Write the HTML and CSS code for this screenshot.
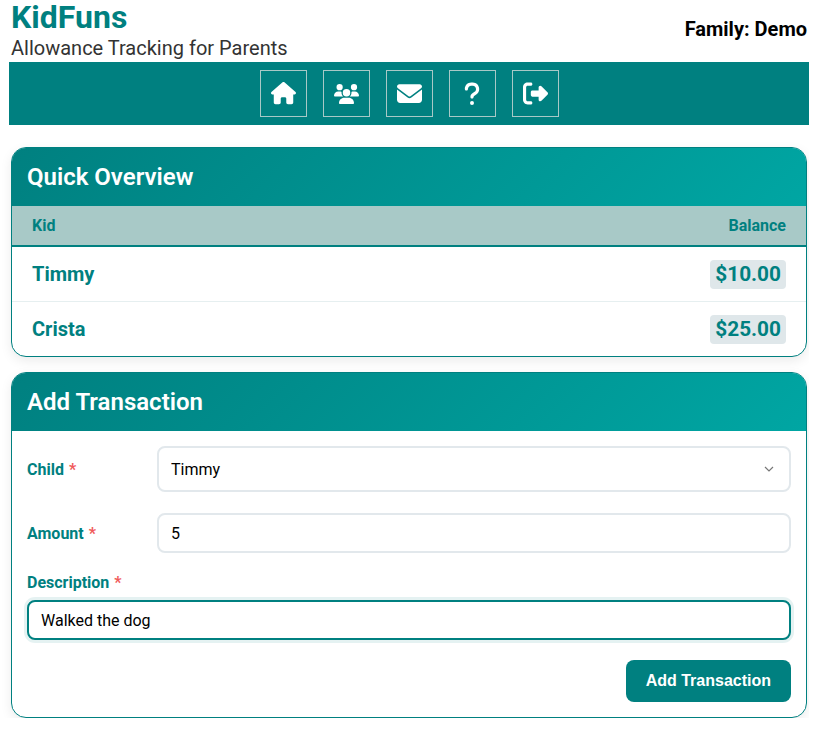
FILE: index.html
```html
<!DOCTYPE html>
<html lang="en">
<head>
    <meta charset="UTF-8">
    <meta name="viewport" content="width=device-width, initial-scale=1.0">
    <title>KidFuns</title>
    <link rel="stylesheet" href="styles.css">
</head>
<body>
    <header class="top">
        <div>
            <h1>KidFuns</h1>
            <p class="tagline">Allowance Tracking for Parents</p>
        </div>
        <div class="family">Family: Demo</div>
    </header>

    <nav class="nav">
        <a class="nav-btn" href="#"><svg class="icon" viewBox="0 0 576 512"><path d="M575.8 255.5c0 18-15 32.1-32 32.1h-32l.7 160.2c0 2.7-.2 5.4-.5 8.1V472c0 22.1-17.9 40-40 40H456c-1.1 0-2.2 0-3.3-.1c-1.4 .1-2.8 .1-4.2 .1H416 392c-22.1 0-40-17.9-40-40V448 384c0-17.7-14.3-32-32-32H256c-17.7 0-32 14.3-32 32v64 24c0 22.1-17.9 40-40 40H160 128.1c-1.5 0-3-.1-4.5-.2c-1.2 .1-2.4 .2-3.6 .2H104c-22.1 0-40-17.9-40-40V360c0-.9 0-1.9 .1-2.8V287.6H32c-18 0-32-14-32-32.1c0-9 3-17 10-24L266.4 8c7-7 15-8 22-8s15 2 21 7L564.8 231.5c8 7 12 15 11 24z"/></svg></a>
        <a class="nav-btn" href="#"><svg class="icon" viewBox="0 0 640 512"><path d="M144 0a80 80 0 1 1 0 160A80 80 0 1 1 144 0zM512 0a80 80 0 1 1 0 160A80 80 0 1 1 512 0zM0 298.7C0 239.8 47.8 192 106.7 192h42.7c15.9 0 31 3.5 44.6 9.7c-1.3 7.2-1.9 14.7-1.9 22.3c0 38.2 16.8 72.5 43.3 96c-.2 0-.4 0-.7 0H21.3C9.6 320 0 310.4 0 298.7zM405.3 320c-.2 0-.4 0-.7 0c26.6-23.5 43.3-57.8 43.3-96c0-7.6-.7-15-1.9-22.3c13.6-6.3 28.7-9.7 44.6-9.7h42.7C592.2 192 640 239.8 640 298.7c0 11.8-9.6 21.3-21.3 21.3H405.3zM224 224a96 96 0 1 1 192 0 96 96 0 1 1 -192 0zM128 485.3C128 411.7 187.7 352 261.3 352H378.7C452.3 352 512 411.7 512 485.3c0 14.7-11.9 26.7-26.7 26.7H154.7c-14.7 0-26.7-11.9-26.7-26.7z"/></svg></a>
        <a class="nav-btn" href="#"><svg class="icon" viewBox="0 0 512 512"><path d="M48 64C21.5 64 0 85.5 0 112c0 15.1 7.1 29.3 19.2 38.4L236.8 313.6c11.4 8.5 27 8.5 38.4 0L492.8 150.4c12.1-9.1 19.2-23.3 19.2-38.4c0-26.5-21.5-48-48-48H48zM0 176V384c0 35.3 28.7 64 64 64H448c35.3 0 64-28.7 64-64V176L294.4 339.2c-22.8 17.1-54 17.1-76.8 0L0 176z"/></svg></a>
        <a class="nav-btn" href="#"><svg class="icon icon-narrow" viewBox="0 0 320 512"><path d="M80 160c0-35.3 28.7-64 64-64h32c35.3 0 64 28.7 64 64v3.6c0 21.8-11.1 42.1-29.4 53.8l-42.2 27.1c-25.2 16.2-40.4 44.1-40.4 74V320c0 17.7 14.3 32 32 32s32-14.3 32-32v-1.4c0-8.2 4.2-15.8 11-20.2l42.2-27.1c36.6-23.6 58.8-64.1 58.8-107.7V160c0-70.7-57.3-128-128-128H144C73.3 32 16 89.3 16 160c0 17.7 14.3 32 32 32s32-14.3 32-32zm80 320a40 40 0 1 0 0-80 40 40 0 1 0 0 80z"/></svg></a>
        <a class="nav-btn" href="#"><svg class="icon" viewBox="0 0 512 512"><path d="M377.9 105.9L500.7 228.7c7.2 7.2 11.3 17.1 11.3 27.3s-4.1 20.1-11.3 27.3L377.9 406.1c-6.4 6.4-15 9.9-24 9.9c-18.7 0-33.9-15.2-33.9-33.9l0-62.1-128 0c-17.7 0-32-14.3-32-32l0-64c0-17.7 14.3-32 32-32l128 0 0-62.1c0-18.7 15.2-33.9 33.9-33.9c9 0 17.6 3.6 24 9.9zM160 96L96 96c-17.7 0-32 14.3-32 32l0 256c0 17.7 14.3 32 32 32l64 0c17.7 0 32 14.3 32 32s-14.3 32-32 32l-64 0c-53 0-96-43-96-96L0 128C0 75 43 32 96 32l64 0c17.7 0 32 14.3 32 32s-14.3 32-32 32z"/></svg></a>
    </nav>

    <main class="content">
        <section class="card">
            <h2 class="card-title">Quick Overview</h2>
            <div class="row row-head">
                <span>Kid</span>
                <span>Balance</span>
            </div>
            <div class="row">
                <span class="kid">Timmy</span>
                <span class="balance">$10.00</span>
            </div>
            <div class="row">
                <span class="kid">Crista</span>
                <span class="balance">$25.00</span>
            </div>
        </section>

        <section class="card">
            <h2 class="card-title">Add Transaction</h2>
            <form class="form">
                <div class="field">
                    <label class="label" for="child">Child <span class="req">*</span></label>
                    <select class="control control-select" id="child">
                        <option>Timmy</option>
                        <option>Crista</option>
                    </select>
                </div>
                <div class="field">
                    <label class="label" for="amount">Amount <span class="req">*</span></label>
                    <input class="control" id="amount" type="text" value="5">
                </div>
                <div class="field-stack">
                    <label class="label" for="desc">Description <span class="req">*</span></label>
                    <input class="control control-active" id="desc" type="text" value="Walked the dog">
                </div>
                <div class="actions">
                    <button class="submit" type="button">Add Transaction</button>
                </div>
            </form>
        </section>
    </main>
</body>
</html>
```

FILE: styles.css
```css
:root {
    --teal: #008080;
    --teal-light: #00a6a3;
    --head-bg: #a8c9c7;
    --field-border: #e2e8ec;
}

* {
    box-sizing: border-box;
}

body {
    font-family: Roboto, sans-serif;
    margin: 0;
    padding: 0 0 0 9px;
    width: 809px;
    background: #fff;
    color: #000;
}

.top {
    display: flex;
    justify-content: space-between;
    padding: 0 2px;
    height: 62px;
}

h1 {
    color: var(--teal);
    font-size: 32px;
    font-weight: 700;
    line-height: 34px;
    margin: 0 0 2px;
}

.tagline {
    color: #333;
    font-size: 20px;
    line-height: 24px;
    margin: 0;
}

.family {
    font-size: 20px;
    font-weight: 700;
    line-height: 24px;
    margin-top: 17px;
}

.nav {
    display: flex;
    justify-content: center;
    gap: 16px;
    background: var(--teal);
    padding: 8px;
    height: 63px;
}

.nav-btn {
    display: flex;
    align-items: center;
    justify-content: center;
    width: 47px;
    height: 47px;
    border: 1px solid #a8c9c7;
    fill: #fff;
}

.icon {
    width: 25px;
}

.icon-narrow {
    width: 16px;
}

.content {
    display: flex;
    flex-direction: column;
    gap: 15px;
    padding: 22px 2px 0;
}

.card {
    background: #fff;
    border: 1px solid var(--teal);
    border-radius: 15px;
    box-shadow: 0 4px 12px rgba(0, 0, 0, 0.08);
    overflow: hidden;
}

.card-title {
    background: linear-gradient(135deg, var(--teal), var(--teal-light));
    color: #fff;
    font-size: 24px;
    font-weight: 600;
    line-height: 58px;
    height: 58px;
    margin: 0;
    padding: 0 15px;
}

.row {
    display: flex;
    align-items: center;
    justify-content: space-between;
    height: 55px;
    padding: 0 20px;
    border-top: 1px solid #e6eff0;
}

.row-head {
    height: 41px;
    border-top: 0;
    border-bottom: 2px solid var(--teal);
    background: var(--head-bg);
    color: var(--teal);
    font-size: 16px;
    font-weight: 700;
}

.row-head + .row {
    height: 54px;
    border-top: 0;
}

.kid {
    color: var(--teal);
    font-size: 20px;
    font-weight: 700;
}

.balance {
    background: #dfe7ea;
    border-radius: 4px;
    color: var(--teal);
    font-size: 20.8px;
    font-weight: 700;
    line-height: 29px;
    padding: 0 5px;
}

.form {
    padding: 15px;
}

.field {
    display: flex;
    align-items: center;
    margin-bottom: 21px;
}

.field:nth-child(2) {
    margin-bottom: 20px;
}

.field .label {
    flex: 0 0 130px;
}

.field .control {
    flex: 1;
}

.field-stack .label {
    display: block;
    margin-bottom: 8px;
}

.label {
    color: var(--teal);
    font-size: 16px;
    font-weight: 700;
    line-height: 19px;
}

.req {
    color: #f05a5a;
    margin-left: 1px;
}

.control {
    display: block;
    width: 100%;
    height: 40px;
    padding: 0 12px;
    border: 2px solid var(--field-border);
    border-radius: 8px;
    background: #fff;
    color: #000;
    font-family: Roboto, sans-serif;
    font-size: 16px;
    outline: none;
}

.control-select {
    height: 46px;
    appearance: none;
    background-image: url("data:image/svg+xml,%3Csvg xmlns='http://www.w3.org/2000/svg' width='10' height='6'%3E%3Cpath d='M1 1l4 4 4-4' fill='none' stroke='%23777' stroke-width='1.2'/%3E%3C/svg%3E");
    background-repeat: no-repeat;
    background-position: right 15px center;
}

.control-active {
    border-color: var(--teal);
    box-shadow: 0 0 0 3px rgba(0, 128, 128, 0.1);
}

.actions {
    display: flex;
    justify-content: flex-end;
    margin-top: 20px;
}

.submit {
    height: 42px;
    padding: 0 20px;
    border: none;
    border-radius: 8px;
    background: var(--teal);
    color: #fff;
    font-family: "Liberation Sans", Arial, sans-serif;
    font-size: 16px;
    font-weight: 700;
}
```
